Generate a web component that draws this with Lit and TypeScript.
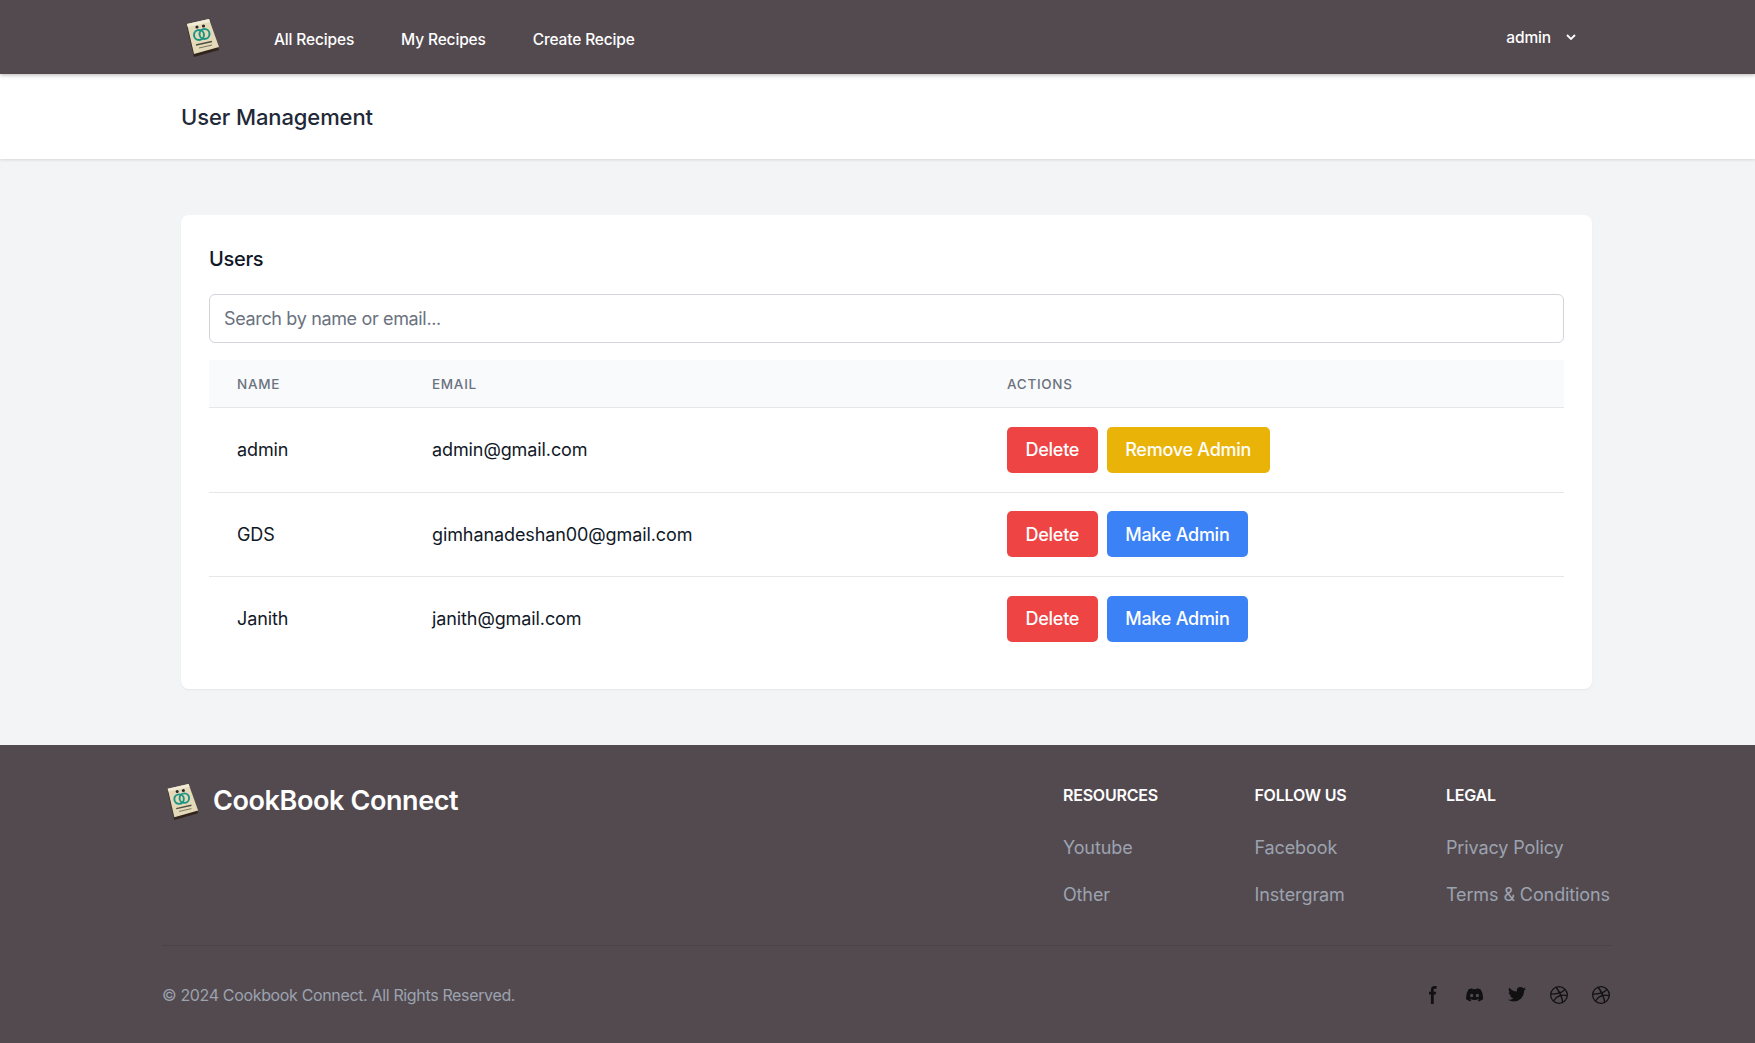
import { LitElement, css, html, svg } from 'lit';
import { customElement, state } from 'lit/decorators.js';

interface User {
  name: string;
  email: string;
  admin: boolean;
}

const USERS: User[] = [
  { name: 'admin', email: 'admin@gmail.com', admin: true },
  { name: 'GDS', email: 'gimhanadeshan00@gmail.com', admin: false },
  { name: 'Janith', email: 'janith@gmail.com', admin: false },
];

const dribbble = 'M10 0a10 10 0 1 0 10 10A10.009 10.009 0 0 0 10 0Zm6.613 4.614a8.523 8.523 0 0 1 1.93 5.32 20.094 20.094 0 0 0-5.949-.274c-.059-.149-.122-.292-.184-.441a23.879 23.879 0 0 0-.566-1.239 11.41 11.41 0 0 0 4.769-3.366ZM8 1.707a8.821 8.821 0 0 1 2-.238 8.5 8.5 0 0 1 5.664 2.152 9.608 9.608 0 0 1-4.476 3.087A45.758 45.758 0 0 0 8 1.707ZM1.642 8.262a8.57 8.57 0 0 1 4.73-5.981A53.998 53.998 0 0 1 9.54 7.222a32.078 32.078 0 0 1-7.9 1.04h.002Zm2.01 7.46a8.51 8.51 0 0 1-2.2-5.707v-.262a31.64 31.64 0 0 0 8.777-1.219c.243.477.477.964.692 1.449-.114.032-.227.067-.336.1a13.569 13.569 0 0 0-6.942 5.636l.009.003ZM10 18.556a8.508 8.508 0 0 1-5.243-1.8 11.717 11.717 0 0 1 6.7-5.332.509.509 0 0 1 .055-.02 35.65 35.65 0 0 1 1.819 6.476 8.476 8.476 0 0 1-3.331.676Zm4.772-1.462A37.232 37.232 0 0 0 13.113 11a12.513 12.513 0 0 1 5.321.364 8.56 8.56 0 0 1-3.66 5.73h-.002Z';

const SOCIALS = [
  { w: 8, h: 19, size: 18, d: 'M6.135 3H8V0H6.135a4.147 4.147 0 0 0-4.142 4.142V6H0v3h2v9.938h3V9h2.021l.592-3H5V3.591A.6.6 0 0 1 5.592 3h.543Z' },
  { w: 21, h: 16, size: 18, d: 'M16.942 1.556a16.3 16.3 0 0 0-4.126-1.3 12.04 12.04 0 0 0-.529 1.1 15.175 15.175 0 0 0-4.573 0 11.585 11.585 0 0 0-.535-1.1 16.274 16.274 0 0 0-4.129 1.3A17.392 17.392 0 0 0 .182 13.218a15.785 15.785 0 0 0 4.963 2.521c.41-.564.773-1.16 1.084-1.785a10.63 10.63 0 0 1-1.706-.83c.143-.106.283-.217.418-.33a11.664 11.664 0 0 0 10.118 0c.137.113.277.224.418.33-.544.328-1.116.606-1.71.832a12.52 12.52 0 0 0 1.084 1.785 16.46 16.46 0 0 0 5.064-2.595 17.286 17.286 0 0 0-2.973-11.59ZM6.678 10.813a1.941 1.941 0 0 1-1.8-2.045 1.93 1.93 0 0 1 1.8-2.047 1.919 1.919 0 0 1 1.8 2.047 1.93 1.93 0 0 1-1.8 2.045Zm6.644 0a1.94 1.94 0 0 1-1.8-2.045 1.93 1.93 0 0 1 1.8-2.047 1.918 1.918 0 0 1 1.8 2.047 1.93 1.93 0 0 1-1.8 2.045Z' },
  { w: 20, h: 17, size: 18, d: 'M20 1.892a8.178 8.178 0 0 1-2.355.635 4.074 4.074 0 0 0 1.8-2.235 8.344 8.344 0 0 1-2.605.98A4.13 4.13 0 0 0 13.85 0a4.068 4.068 0 0 0-4.1 4.038 4 4 0 0 0 .105.919A11.705 11.705 0 0 1 1.4.734a4.006 4.006 0 0 0 1.268 5.392 4.165 4.165 0 0 1-1.859-.5v.05A4.057 4.057 0 0 0 4.1 9.635a4.19 4.19 0 0 1-1.856.07 4.108 4.108 0 0 0 3.831 2.807A8.36 8.36 0 0 1 0 14.184 11.732 11.732 0 0 0 6.291 16 11.502 11.502 0 0 0 17.964 4.5c0-.177 0-.35-.012-.523A8.143 8.143 0 0 0 20 1.892Z' },
  { w: 20, h: 20, size: 18, d: dribbble },
  { w: 20, h: 20, size: 18, d: dribbble },
];

const logo = (size: number) => html`
  <svg width=${size} height=${size} viewBox="0 0 40 40" aria-hidden="true">
    <defs>
      <filter id="soft" x="-20%" y="-20%" width="140%" height="140%">
        <feGaussianBlur stdDeviation="0.45"></feGaussianBlur>
      </filter>
    </defs>
    ${svg`
      <g filter="url(#soft)">
        <polygon points="6,10 28,4 38,33 13,40" fill="#33251c"></polygon>
        <polygon points="6,7 28,2 38,30 13,37" fill="#e4d9b8"></polygon>
        <polygon points="6,7 28,2 29,5 7,10" fill="#f1ead4"></polygon>
        <circle cx="16" cy="10" r="1.6" fill="#25282a"></circle>
        <circle cx="22.5" cy="9" r="1.6" fill="#25282a"></circle>
        <circle cx="18" cy="18" r="5" fill="none" stroke="#1f9484" stroke-width="2"></circle>
        <circle cx="23.5" cy="17" r="5" fill="none" stroke="#1f9484" stroke-width="2"></circle>
        <line x1="15" y1="28" x2="31" y2="24.5" stroke="#4e4e42" stroke-width="1.5"></line>
        <line x1="18" y1="31" x2="31" y2="28" stroke="#77735f" stroke-width="1"></line>
      </g>
    `}
  </svg>
`;

@customElement('app-root')
export class AppRoot extends LitElement {
  static styles = css`
    :host {
      display: block;
      min-height: 1043px;
      background: #f3f4f6;
      font-family: Inter, "Noto Sans", sans-serif;
      color: #1f2937;
    }

    .nav {
      display: flex;
      align-items: center;
      height: 74px;
      padding: 0 179px 0 181px;
      background: #534a50;
      color: #fff;
      box-shadow: 0 1px 4px rgba(0, 0, 0, 0.3);
      position: relative;
    }

    .nav-logo {
      display: flex;
      width: 93px;
    }

    .nav-links {
      display: flex;
      gap: 47px;
      font-size: 15.5px;
      font-weight: 500;
      letter-spacing: -0.15px;
      padding-top: 4px;
    }

    .user {
      margin-left: auto;
      display: flex;
      align-items: center;
      gap: 15px;
      font-size: 15.5px;
      font-weight: 500;
      letter-spacing: -0.15px;
    }

    .page-head {
      height: 85px;
      padding: 0 181px;
      display: flex;
      align-items: center;
      background: #fff;
      box-shadow: 0 1px 3px rgba(0, 0, 0, 0.12);
    }

    .page-head h1 {
      margin: 0;
      font-size: 22px;
      line-height: 28px;
      font-weight: 500;
      letter-spacing: -0.1px;
      color: #1f2937;
    }

    .main {
      padding: 56px 163px 56px 181px;
    }

    .card {
      background: #fff;
      border-radius: 8px;
      padding: 30px 28px 28px;
      height: 474px;
      box-sizing: border-box;
      box-shadow: 0 1px 2px rgba(0, 0, 0, 0.06);
    }

    .card h2 {
      margin: 0 0 21px;
      font-size: 20px;
      line-height: 28px;
      font-weight: 500;
      letter-spacing: -0.3px;
      color: #111827;
    }

    .search {
      display: block;
      width: 100%;
      height: 49px;
      box-sizing: border-box;
      padding: 0 14px;
      border: 1px solid #d1d5db;
      border-radius: 6px;
      font: 400 18px Inter, sans-serif;
      letter-spacing: -0.35px;
      color: #1f2937;
      outline: none;
      margin-bottom: 17px;
    }

    .search::placeholder {
      color: #6b7280;
    }

    table {
      width: 100%;
      border-collapse: collapse;
      table-layout: fixed;
    }

    th {
      height: 47px;
      padding: 0 0 0 28px;
      background: #f9fafb;
      border-bottom: 1px solid #e5e7eb;
      text-align: left;
      font-size: 13.5px;
      font-weight: 500;
      letter-spacing: 0.7px;
      color: #6b7280;
    }

    th:nth-child(1) {
      width: 167px;
    }

    th:nth-child(2) {
      width: 547px;
    }

    td {
      height: 83.5px;
      padding: 0 0 0 28px;
      border-bottom: 1px solid #e5e7eb;
      font-size: 18px;
      letter-spacing: -0.1px;
      color: #111827;
    }

    tr:last-child td {
      border-bottom: none;
    }

    .actions {
      display: flex;
      gap: 9px;
    }

    button {
      height: 46px;
      padding: 0 18.5px;
      border: none;
      border-radius: 5px;
      color: #fff;
      font: 500 18px Inter, sans-serif;
      letter-spacing: -0.25px;
    }

    .delete {
      background: #ef4444;
    }

    .revoke {
      background: #eab308;
    }

    .grant {
      background: #3b82f6;
    }

    .footer {
      height: 298px;
      box-sizing: border-box;
      padding: 32px 143px 0 162px;
      background: #534a50;
    }

    .footer-top {
      display: flex;
      justify-content: space-between;
      height: 168px;
      border-bottom: 1px solid #4a4248;
    }

    .brand {
      display: flex;
      align-items: center;
      gap: 13px;
      height: 48px;
      font-size: 27px;
      font-weight: 600;
      letter-spacing: -0.4px;
      color: #fff;
    }

    .brand span {
      padding-bottom: 2px;
    }

    .cols {
      display: grid;
      grid-template-columns: 191.5px 191.5px auto;
      padding: 6px 2px 0 0;
    }

    .cols h3 {
      margin: 0 0 27px;
      font-size: 16px;
      line-height: 24px;
      font-weight: 600;
      letter-spacing: -0.2px;
      text-transform: uppercase;
      color: #fff;
    }

    .cols a {
      display: block;
      margin-bottom: 19px;
      font-size: 18px;
      line-height: 28px;
      letter-spacing: -0.1px;
      color: #9ca3af;
    }

    .footer-bottom {
      display: flex;
      justify-content: space-between;
      align-items: center;
      height: 98px;
    }

    .copy {
      font-size: 16px;
      letter-spacing: -0.35px;
      color: #9ca3af;
    }

    .socials {
      display: flex;
      gap: 24px;
      padding-right: 2px;
    }

    .socials span {
      display: flex;
      align-items: center;
      justify-content: center;
      width: 18px;
      height: 18px;
    }

    .socials svg {
      fill: #111;
      display: block;
    }

    .chevron {
      display: block;
    }
  `;

  @state() private query = '';

  private get rows() {
    const q = this.query.toLowerCase();
    return USERS.filter(u => u.name.toLowerCase().includes(q) || u.email.includes(q));
  }

  render() {
    return html`
      <nav class="nav">
        <div class="nav-logo">${logo(40)}</div>
        <div class="nav-links">
          <span>All Recipes</span>
          <span>My Recipes</span>
          <span>Create Recipe</span>
        </div>
        <div class="user">
          <span>admin</span>
          <svg class="chevron" width="10" height="7" viewBox="0 0 10 7" fill="none" stroke="#fff" stroke-width="1.8">
            <path d="M1 1l4 4 4-4"></path>
          </svg>
        </div>
      </nav>
      <header class="page-head"><h1>User Management</h1></header>
      <main class="main">
        <section class="card">
          <h2>Users</h2>
          <input
            class="search"
            placeholder="Search by name or email..."
            .value=${this.query}
            @input=${(e: Event) => (this.query = (e.target as HTMLInputElement).value)}
          />
          <table>
            <thead>
              <tr><th>NAME</th><th>EMAIL</th><th>ACTIONS</th></tr>
            </thead>
            <tbody>
              ${this.rows.map(
                u => html`
                  <tr>
                    <td>${u.name}</td>
                    <td>${u.email}</td>
                    <td>
                      <div class="actions">
                        <button class="delete">Delete</button>
                        ${u.admin
                          ? html`<button class="revoke">Remove Admin</button>`
                          : html`<button class="grant">Make Admin</button>`}
                      </div>
                    </td>
                  </tr>
                `,
              )}
            </tbody>
          </table>
        </section>
      </main>
      <footer class="footer">
        <div class="footer-top">
          <div class="brand">${logo(38)}<span>CookBook Connect</span></div>
          <div class="cols">
            <div><h3>Resources</h3><a>Youtube</a><a>Other</a></div>
            <div><h3>Follow us</h3><a>Facebook</a><a>Instergram</a></div>
            <div><h3>Legal</h3><a>Privacy Policy</a><a>Terms &amp; Conditions</a></div>
          </div>
        </div>
        <div class="footer-bottom">
          <div class="copy">© 2024 Cookbook Connect. All Rights Reserved.</div>
          <div class="socials">
            ${SOCIALS.map(
              s => html`<span>
                <svg viewBox="0 0 ${s.w} ${s.h}" width=${s.w >= s.h ? s.size : (s.size * s.w) / s.h} height=${s.w >= s.h ? (s.size * s.h) / s.w : s.size}>
                  <path d=${s.d}></path>
                </svg>
              </span>`,
            )}
          </div>
        </div>
      </footer>
    `;
  }
}

declare global {
  interface HTMLElementTagNameMap {
    'app-root': AppRoot;
  }
}
